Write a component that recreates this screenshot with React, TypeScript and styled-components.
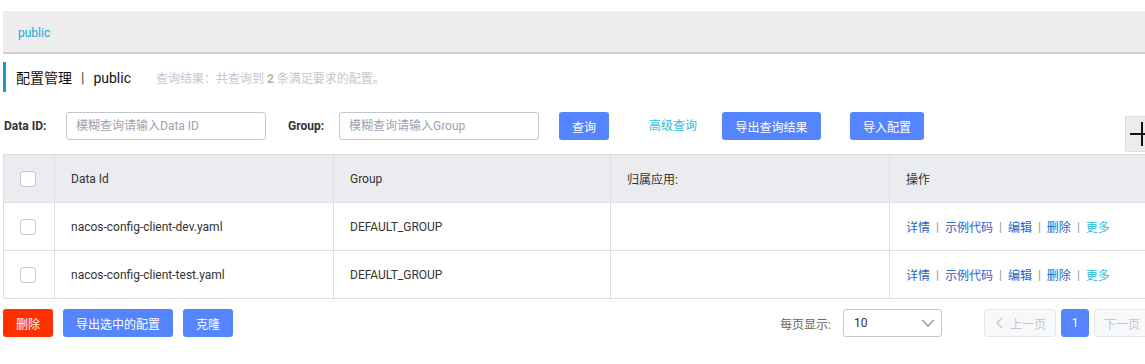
import React from 'react';
import styled, { createGlobalStyle } from 'styled-components';

const Global = createGlobalStyle`
  html, body {
    margin: 0;
    padding: 0;
    background: #fff;
    overflow: hidden;
  }
  body {
    font-family: Roboto, "Noto Sans CJK SC", sans-serif;
    font-size: 12px;
    color: #333;
  }
`;

const Page = styled.div`
  width: 1163px;
  padding: 11px 0 0 3px;
`;

const TopBar = styled.div`
  height: 43px;
  background: #ededed;
  border-bottom: 2px solid #d0d0d0;
  display: flex;
  align-items: center;
  padding-left: 15px;
  padding-top: 2px;
  box-sizing: border-box;
  color: #1ba8d6;
  font-size: 12px;
`;

const TitleRow = styled.div`
  margin-top: 8px;
  height: 30px;
  border-left: 3px solid #1b97d4;
  display: flex;
  align-items: center;
  padding-left: 10px;
`;

const Title = styled.span`
  font-size: 14px;
  color: #111;
`;

const Sep = styled.span`
  margin: 0 9px;
  color: #6b4a1e;
`;

const Hint = styled.span`
  margin-left: 25px;
  color: #c4c6cf;
  font-size: 12px;

  b {
    font-weight: bold;
    color: #b0b2ba;
  }
`;

const FilterRow = styled.div`
  margin-top: 20px;
  display: flex;
  align-items: flex-start;
  height: 42px;
`;

const Label = styled.label<{ $w: number; $ml?: number }>`
  width: ${(p) => p.$w}px;
  margin-left: ${(p) => p.$ml ?? 0}px;
  height: 28px;
  line-height: 28px;
  font-weight: bold;
  font-size: 12px;
  color: #333;
  flex-shrink: 0;
`;

const Input = styled.input`
  box-sizing: border-box;
  width: 200px;
  height: 28px;
  border: 1px solid #c4c6cf;
  border-radius: 3px;
  padding: 0 9px;
  font-family: inherit;
  font-size: 12px;
  outline: none;
  flex-shrink: 0;

  &::placeholder {
    color: #a0a2ad;
  }
`;

const Button = styled.button<{ $w: number; $ml?: number; $danger?: boolean }>`
  box-sizing: border-box;
  width: ${(p) => p.$w}px;
  margin-left: ${(p) => p.$ml ?? 0}px;
  height: 28px;
  border: none;
  border-radius: 3px;
  background: ${(p) => (p.$danger ? '#ff3000' : '#5584ff')};
  color: #fff;
  font-family: inherit;
  font-size: 12px;
  padding: 0;
  flex-shrink: 0;
  cursor: pointer;
`;

const TextLink = styled.a<{ $ml: number }>`
  margin-left: ${(p) => p.$ml}px;
  line-height: 28px;
  color: #2fbede;
  font-size: 12px;
  width: 48px;
  flex-shrink: 0;
  text-decoration: none;
`;

const PlusButton = styled.div`
  box-sizing: border-box;
  margin-left: auto;
  margin-right: 5px;
  margin-top: 4px;
  width: 36px;
  height: 36px;
  background: #ececec;
  border: 1px solid #dcdcdc;
  display: flex;
  align-items: center;
  padding-left: 4px;
  flex-shrink: 0;
`;

const Table = styled.div`
  border-top: 1px solid #dcdee3;
  border-left: 1px solid #dcdee3;
`;

const Row = styled.div<{ $head?: boolean }>`
  display: grid;
  grid-template-columns: 50px 279px 277px 279px 1fr;
  height: 47px;
  border-bottom: 1px solid #dcdee3;
  background: ${(p) => (p.$head ? '#ebecf0' : '#fff')};
`;

const Cell = styled.div`
  display: flex;
  align-items: center;
  padding-left: 16px;
  border-left: 1px solid #dcdee3;
  color: #333;
  font-size: 12px;

  &:first-child {
    border-left: none;
  }
`;

const Check = styled.span`
  box-sizing: border-box;
  width: 16px;
  height: 16px;
  border: 1px solid #c4c6cf;
  border-radius: 3px;
  background: #fff;
`;

const Actions = styled.div`
  display: flex;
  align-items: center;
`;

const Act = styled.a<{ $more?: boolean }>`
  color: ${(p) => (p.$more ? '#2fbede' : '#1f64c8')};
  text-decoration: none;
`;

const Bar = styled.span`
  margin: 0 6px;
  color: #999;
`;

const Footer = styled.div`
  margin-top: 10px;
  display: flex;
  align-items: center;
  height: 28px;
`;

const PageSizeLabel = styled.span`
  margin-left: auto;
  color: #666;
  font-size: 12px;
`;

const Select = styled.div`
  box-sizing: border-box;
  margin-left: 12px;
  width: 99px;
  height: 28px;
  border: 1px solid #c4c6cf;
  border-radius: 3px;
  display: flex;
  align-items: center;
  justify-content: space-between;
  padding: 0 6px 0 10px;
  color: #333;
`;

const Pager = styled.div`
  margin-left: 42px;
  display: flex;
  align-items: center;
  gap: 5px;
`;

const PageBtn = styled.div<{ $active?: boolean; $w: number }>`
  box-sizing: border-box;
  width: ${(p) => p.$w}px;
  height: 28px;
  border-radius: 3px;
  display: flex;
  align-items: center;
  justify-content: center;
  gap: 4px;
  font-size: 12px;
  background: ${(p) => (p.$active ? '#5584ff' : '#f7f8fa')};
  border: 1px solid ${(p) => (p.$active ? '#5584ff' : '#e6e7eb')};
  color: ${(p) => (p.$active ? '#fff' : '#c4c6cf')};
`;

const Chevron = ({ dir, color, size = 12 }: { dir: 'down' | 'left' | 'right'; color: string; size?: number }) => (
  <svg width={size} height={size} viewBox="0 0 12 12">
    {dir === 'down' && <path d="M1 3.5 L6 8.5 L11 3.5" fill="none" stroke={color} strokeWidth="1.3" />}
    {dir === 'left' && <path d="M8 1 L3 6 L8 11" fill="none" stroke={color} strokeWidth="1.3" />}
    {dir === 'right' && <path d="M4 1 L9 6 L4 11" fill="none" stroke={color} strokeWidth="1.3" />}
  </svg>
);

const rows = [
  { id: 'nacos-config-client-dev.yaml', group: 'DEFAULT_GROUP' },
  { id: 'nacos-config-client-test.yaml', group: 'DEFAULT_GROUP' },
];

const App: React.FC = () => {
  return (
    <Page>
      <Global />
      <TopBar>public</TopBar>

      {/* title */}
      <TitleRow>
        <Title>
          配置管理<Sep>|</Sep>public
        </Title>
        <Hint>
          查询结果：共查询到 <b>2</b> 条满足要求的配置。
        </Hint>
      </TitleRow>

      {/* filters */}
      <FilterRow>
        <Label $w={62} $ml={1}>Data ID:</Label>
        <Input placeholder="模糊查询请输入Data ID" />
        <Label $w={51} $ml={22}>Group:</Label>
        <Input placeholder="模糊查询请输入Group" />
        <Button $w={50} $ml={20}>查询</Button>
        <TextLink $ml={40}>高级查询</TextLink>
        <Button $w={99} $ml={25}>导出查询结果</Button>
        <Button $w={74} $ml={29}>导入配置</Button>
        <PlusButton>
          <svg width="24" height="24" viewBox="0 0 24 24">
            <path d="M0 12 H24 M12 0 V24" stroke="#111" strokeWidth="2" />
          </svg>
        </PlusButton>
      </FilterRow>

      {/* table */}
      <Table>
        <Row $head>
          <Cell><Check /></Cell>
          <Cell>Data Id</Cell>
          <Cell>Group</Cell>
          <Cell>归属应用:</Cell>
          <Cell>操作</Cell>
        </Row>
        {rows.map((r) => (
          <Row key={r.id}>
            <Cell><Check /></Cell>
            <Cell>{r.id}</Cell>
            <Cell>{r.group}</Cell>
            <Cell />
            <Cell>
              <Actions>
                <Act>详情</Act><Bar>|</Bar>
                <Act>示例代码</Act><Bar>|</Bar>
                <Act>编辑</Act><Bar>|</Bar>
                <Act>删除</Act><Bar>|</Bar>
                <Act $more>更多</Act>
              </Actions>
            </Cell>
          </Row>
        ))}
      </Table>

      {/* footer */}
      <Footer>
        <Button $w={50} $danger>删除</Button>
        <Button $w={110} $ml={10}>导出选中的配置</Button>
        <Button $w={50} $ml={10}>克隆</Button>
        <PageSizeLabel>每页显示:</PageSizeLabel>
        <Select>
          <span>10</span>
          <Chevron dir="down" color="#999" size={14} />
        </Select>
        <Pager>
          <PageBtn $w={72}>
            <Chevron dir="left" color="#c4c6cf" />
            上一页
          </PageBtn>
          <PageBtn $w={28} $active>1</PageBtn>
          <PageBtn $w={72}>
            下一页
            <Chevron dir="right" color="#c4c6cf" />
          </PageBtn>
        </Pager>
      </Footer>
    </Page>
  );
};

export default App;
